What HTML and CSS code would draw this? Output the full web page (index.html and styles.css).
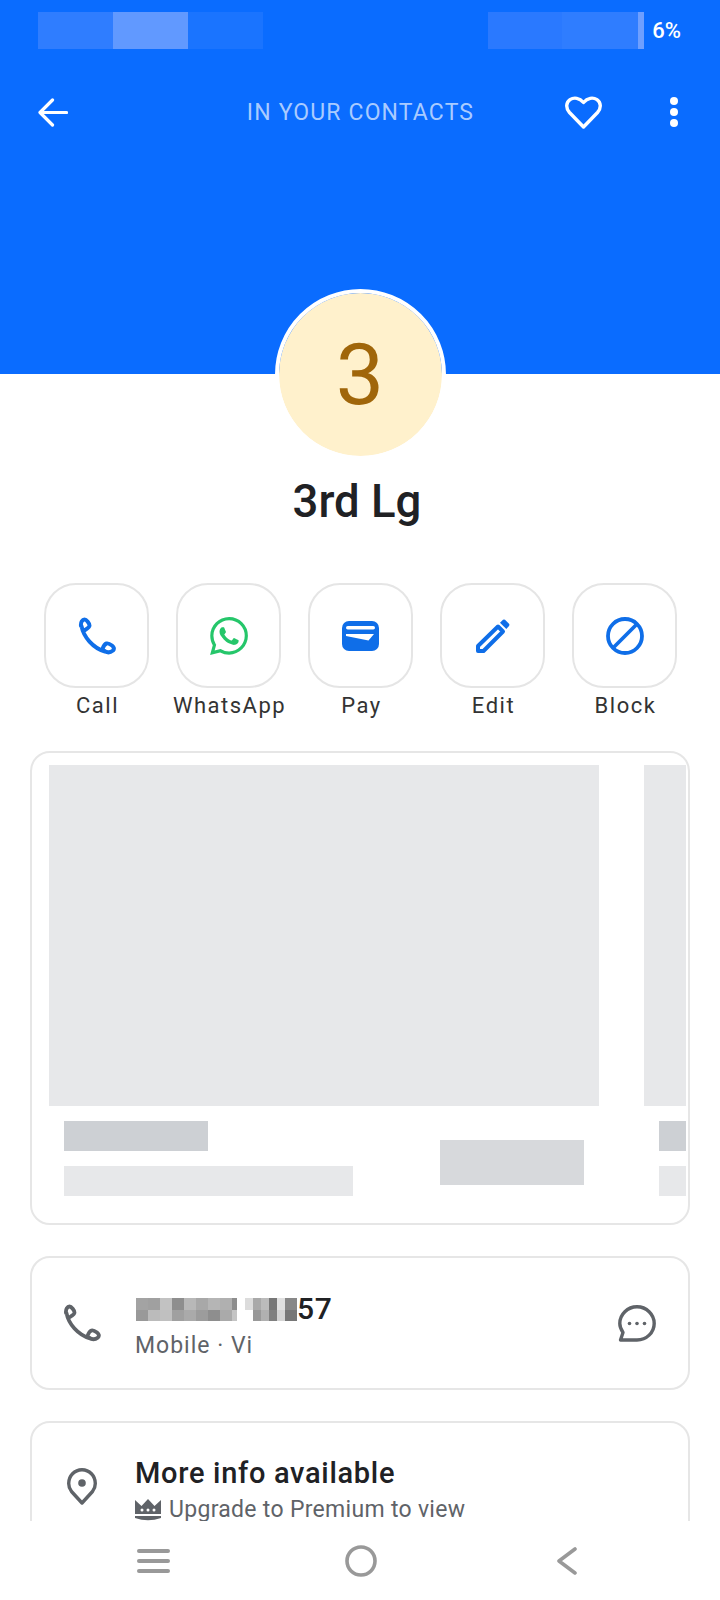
FILE: index.html
```html
<!DOCTYPE html>
<html lang="en">
<head>
    <meta charset="UTF-8">
    <meta name="viewport" content="width=device-width, initial-scale=1.0">
    <title>Contact</title>
    <link rel="stylesheet" href="styles.css">
</head>
<body>
    <main class="page">
        <header class="hero">
            <div class="status">
                <div class="status-group">
                    <span class="patch patch-a"></span>
                    <span class="patch patch-b"></span>
                    <span class="patch patch-c"></span>
                </div>
                <div class="status-group">
                    <span class="patch patch-d"></span>
                    <span class="patch patch-e"></span>
                    <span class="patch patch-f"></span>
                    <span class="battery">6%</span>
                </div>
            </div>
            <div class="toolbar">
                <svg class="back" viewBox="0 0 30 29" fill="none" stroke="#fff" stroke-width="3.2" stroke-linecap="round" stroke-linejoin="round"><path d="M14.5 2 2 14.5 14.5 27M2.5 14.5H28.5"/></svg>
                <div class="toolbar-title">IN YOUR CONTACTS</div>
                <div class="toolbar-actions">
                    <svg class="heart" viewBox="0 0 37 33" fill="none" stroke="#fff" stroke-width="3.4" stroke-linejoin="round"><path d="M18.5 31 4.500 16.500C.5 12 1 6.500 5 3.700 9 1 14.500 1.800 18.500 6.500 22.500 1.800 28 1 32 3.700 36 6.500 36.500 12 32.500 16.500Z"/></svg>
                    <div class="dots"><span></span><span></span><span></span></div>
                </div>
            </div>
        </header>

        <div class="avatar">3</div>
        <h1 class="name">3rd Lg</h1>

        <div class="actions">
            <div class="action">
                <div class="action-btn">
                    <svg class="ic" viewBox="0 0 38 38" fill="none" stroke="#0f6ee8" stroke-width="4" stroke-linecap="round" stroke-linejoin="round"><path d="M3 9C2.500 5 4.500 2.500 6.500 2.500 8.500 2.500 11.500 6.500 11.500 8.500 11.500 10.500 8.500 12 5.500 14M3.500 9C5.500 20 15 31 27 34.500M26 33.500C29 36 32.500 35.500 35 33.500 36.500 32 36 30 34 28.500 32 27 30 26 28.500 26.500 27 27 25.500 29 24.500 32"/></svg>
                </div>
                <span class="action-label">Call</span>
            </div>
            <div class="action">
                <div class="action-btn">
                    <svg class="ic" viewBox="0 0 24 24" fill="#25c66a"><path d="M17.472 14.382c-.297-.149-1.758-.867-2.03-.967-.273-.099-.471-.148-.67.15-.197.297-.767.966-.94 1.164-.173.199-.347.223-.644.075-.297-.15-1.255-.463-2.39-1.475-.883-.788-1.48-1.761-1.653-2.059-.173-.297-.018-.458.13-.606.134-.133.298-.347.446-.52.149-.174.198-.298.298-.497.099-.198.05-.371-.025-.52-.075-.149-.669-1.612-.916-2.207-.242-.579-.487-.5-.669-.51-.173-.008-.371-.01-.57-.01-.198 0-.52.074-.792.372-.272.297-1.04 1.016-1.04 2.479 0 1.462 1.065 2.875 1.213 3.074.149.198 2.096 3.2 5.077 4.487.709.306 1.262.489 1.694.625.712.227 1.36.195 1.871.118.571-.085 1.758-.719 2.006-1.413.248-.694.248-1.289.173-1.413-.074-.124-.272-.198-.57-.347m-5.421 7.403h-.004a9.87 9.87 0 01-5.031-1.378l-.361-.214-3.741.982.998-3.648-.235-.374a9.86 9.86 0 01-1.51-5.26c.001-5.45 4.436-9.884 9.888-9.884 2.64 0 5.122 1.03 6.988 2.898a9.825 9.825 0 012.893 6.994c-.003 5.45-4.437 9.884-9.885 9.884m8.413-18.297A11.815 11.815 0 0012.05 0C5.495 0 .16 5.335.157 11.892c0 2.096.547 4.142 1.588 5.945L.057 24l6.305-1.654a11.882 11.882 0 005.683 1.448h.005c6.554 0 11.89-5.335 11.893-11.893a11.821 11.821 0 00-3.48-8.413Z"/></svg>
                </div>
                <span class="action-label">WhatsApp</span>
            </div>
            <div class="action">
                <div class="action-btn">
                    <svg class="ic-pay" viewBox="0 0 37 30"><rect width="37" height="30" rx="7" fill="#0f6ee8"/><rect x="4" y="5" width="29" height="3.500" rx="1.750" fill="#fff"/><path d="M4 13H32L26.500 19.500 4 15Z" fill="#fff"/></svg>
                </div>
                <span class="action-label">Pay</span>
            </div>
            <div class="action">
                <div class="action-btn">
                    <svg class="ic-edit" viewBox="0 0 34 35" fill="none" stroke="#0f6ee8" stroke-width="4" stroke-linejoin="round"><path d="M2 28 22 8.500 27 13.500 7.500 33H2Z"/><path d="M24 4.800 27 1.800Q28 1 29 1.800L33 5.800Q33.800 6.800 33 8L30.300 11Z" fill="#0f6ee8" stroke="none"/></svg>
                </div>
                <span class="action-label">Edit</span>
            </div>
            <div class="action">
                <div class="action-btn">
                    <svg class="ic" viewBox="0 0 38 38" fill="none" stroke="#0f6ee8" stroke-width="3.800"><circle cx="19" cy="19" r="17"/><path d="M7 31 31 7"/></svg>
                </div>
                <span class="action-label">Block</span>
            </div>
        </div>

        <section class="card card-promo">
            <div class="carousel">
                <div class="slide">
                    <div class="slide-img"></div>
                    <div class="slide-foot">
                        <div class="slide-text">
                            <div class="bar bar-title"></div>
                            <div class="bar bar-sub"></div>
                        </div>
                        <div class="bar-btn"></div>
                    </div>
                </div>
                <div class="slide">
                    <div class="slide-img"></div>
                    <div class="slide-foot">
                        <div class="slide-text">
                            <div class="bar bar-title"></div>
                            <div class="bar bar-sub"></div>
                        </div>
                        <div class="bar-btn"></div>
                    </div>
                </div>
            </div>
        </section>

        <section class="card card-row card-phone">
            <svg class="row-icon" viewBox="0 0 38 38" fill="none" stroke="#5f6368" stroke-width="3.800" stroke-linecap="round" stroke-linejoin="round"><path d="M3 9C2.500 5 4.500 2.500 6.500 2.500 8.500 2.500 11.500 6.500 11.500 8.500 11.500 10.500 8.500 12 5.500 14M3.500 9C5.500 20 15 31 27 34.500M26 33.500C29 36 32.500 35.500 35 33.500 36.500 32 36 30 34 28.500 32 27 30 26 28.500 26.500 27 27 25.500 29 24.500 32"/></svg>
            <div class="row-body">
                <div class="number">
                    <svg class="pixels" viewBox="0 0 161 23">
                        <rect x="0" y="0" width="12" height="12" fill="#a3a3a3"/><rect x="12" y="0" width="12" height="12" fill="#a0a0a0"/><rect x="24" y="0" width="12" height="12" fill="#c2c2c2"/><rect x="36" y="0" width="12" height="12" fill="#8e8e8e"/><rect x="48" y="0" width="12" height="12" fill="#b8b8b8"/><rect x="60" y="0" width="12" height="12" fill="#a8a8a8"/><rect x="72" y="0" width="12" height="12" fill="#b5b5b5"/><rect x="84" y="0" width="12" height="12" fill="#b0b0b0"/><rect x="96" y="0" width="5" height="12" fill="#8d8d8d"/>
                        <rect x="109" y="0" width="8" height="12" fill="#dcdcdc"/><rect x="117" y="0" width="8" height="12" fill="#a9a9a9"/><rect x="125" y="0" width="8" height="12" fill="#bbbbbb"/><rect x="133" y="0" width="8" height="12" fill="#777777"/><rect x="141" y="0" width="8" height="12" fill="#e0e0e0"/><rect x="149" y="0" width="12" height="12" fill="#888888"/>
                        <rect x="0" y="12" width="12" height="11" fill="#999999"/><rect x="12" y="12" width="12" height="11" fill="#bbbbbb"/><rect x="24" y="12" width="12" height="11" fill="#c0c0c0"/><rect x="36" y="12" width="12" height="11" fill="#a0a0a0"/><rect x="48" y="12" width="12" height="11" fill="#aaaaaa"/><rect x="60" y="12" width="12" height="11" fill="#9c9c9c"/><rect x="72" y="12" width="12" height="11" fill="#8e8e8e"/><rect x="84" y="12" width="12" height="11" fill="#aaaaaa"/><rect x="96" y="12" width="5" height="11" fill="#c4c4c4"/>
                        <rect x="117" y="12" width="8" height="11" fill="#999999"/><rect x="125" y="12" width="8" height="11" fill="#b0b0b0"/><rect x="133" y="12" width="8" height="11" fill="#808080"/><rect x="141" y="12" width="8" height="11" fill="#d4d4d4"/><rect x="149" y="12" width="12" height="11" fill="#777777"/>
                    </svg>
                    <span class="row-title row-number">57</span>
                </div>
                <div class="row-sub">Mobile · Vi</div>
            </div>
            <svg class="chat-icon" viewBox="0 0 38 37" fill="none" stroke="#5f6368" stroke-width="3.400" stroke-linejoin="round"><path d="M2.500 35 5 27.500C3 24.500 1.800 21.800 1.800 18.500 1.800 9.500 9.500 1.800 19 1.800S36.200 9.500 36.200 18.500 28.500 35 19 35Z"/><circle cx="11.500" cy="18.500" r="1.800" fill="#5f6368" stroke="none"/><circle cx="19" cy="18.500" r="1.800" fill="#5f6368" stroke="none"/><circle cx="26.500" cy="18.500" r="1.800" fill="#5f6368" stroke="none"/></svg>
        </section>

        <section class="card card-row card-info">
            <svg class="pin-icon" viewBox="0 0 30 37" fill="none" stroke="#5f6368" stroke-width="3.400" stroke-linejoin="round"><path d="M15 35 4.500 23.500C2.500 21 1.700 18.500 1.700 15.500 1.700 8 7.500 1.700 15 1.700S28.300 8 28.300 15.500C28.300 18.500 27.500 21 25.500 23.500Z"/><circle cx="15" cy="15" r="3.800" fill="#5f6368" stroke="none"/></svg>
            <div class="row-body">
                <div class="row-title">More info available</div>
                <div class="row-sub upgrade">
                    <svg class="crown" viewBox="0 0 26 22"><path d="M0 1 6.500 7 13 0 19.500 7 26 1V15H0Z" fill="#5f6368"/><path d="M0 17H26V19Q13 23.500 0 19Z" fill="#5f6368"/><circle cx="7" cy="11" r="1.500" fill="#fff"/><circle cx="13" cy="11" r="1.500" fill="#fff"/><circle cx="19" cy="11" r="1.500" fill="#fff"/></svg>
                    <span>Upgrade to Premium to view</span>
                </div>
            </div>
        </section>

        <nav class="navbar">
            <svg class="nav-menu" viewBox="0 0 33 24" fill="#999"><rect width="33" height="4" rx="2"/><rect y="10" width="33" height="4" rx="2"/><rect y="20" width="33" height="4" rx="2"/></svg>
            <svg class="nav-home" viewBox="0 0 32 32" fill="none" stroke="#999" stroke-width="3.600"><circle cx="16" cy="16" r="14"/></svg>
            <svg class="nav-back" viewBox="0 0 20 28" fill="none" stroke="#999" stroke-width="3.600" stroke-linecap="round" stroke-linejoin="round"><path d="M18 2 2 14 18 26"/></svg>
        </nav>
    </main>
</body>
</html>
```

FILE: styles.css
```css
/* Page shell */
html, body {
    margin: 0;
    padding: 0;
}
body {
    font-family: Roboto, "Liberation Sans", sans-serif;
    background-color: #fff;
    color: #202124;
}
.page {
    position: relative;
    width: 720px;
    height: 1600px;
    overflow: hidden;
}

/* Blue header */
.hero {
    height: 374px;
    background-color: #0a6cff;
    box-sizing: border-box;
    padding-top: 12px;
}
.status {
    display: flex;
    justify-content: space-between;
    padding: 0 39px 0 38px;
    height: 37px;
}
.status-group {
    display: flex;
    align-items: stretch;
}
.patch { display: block; }
.patch-a { width: 75px; background-color: #2f7dff; }
.patch-b { width: 75px; background-color: #6199ff; }
.patch-c { width: 75px; background-color: #1a74ff; }
.patch-d { width: 74px; background-color: #2a79ff; }
.patch-e { width: 76px; background-color: #2f7dff; }
.patch-f { width: 6px; background-color: #6e9fff; }
.battery {
    margin-left: 8px;
    font-size: 22px;
    font-weight: 500;
    line-height: 38px;
    color: #fff;
}
.toolbar {
    display: grid;
    grid-template-columns: 1fr auto 1fr;
    align-items: center;
    height: 34px;
    margin-top: 46px;
    padding: 0 42px 0 38px;
}
.back {
    width: 30px;
    height: 29px;
}
.toolbar-title {
    padding: 2px 0 0 5px;
    font-size: 23px;
    line-height: 30px;
    letter-spacing: 1.15px;
    color: #a9cbff;
}
.toolbar-actions {
    display: flex;
    justify-content: flex-end;
    align-items: center;
    gap: 68px;
}
.heart {
    width: 37px;
    height: 33px;
}
.dots {
    display: flex;
    flex-direction: column;
    gap: 3.3px;
}
.dots span {
    width: 8px;
    height: 8px;
    border-radius: 50%;
    background-color: #fff;
}

/* Avatar and name */
.avatar {
    width: 163px;
    height: 163px;
    margin: -85px auto 0;
    border: 4px solid #fff;
    border-radius: 50%;
    background-color: #fff1cc;
    background-clip: padding-box;
    color: #a0660a;
    font-size: 86px;
    line-height: 163px;
    text-align: center;
}
.name {
    margin: 16px 0 0;
    padding-right: 6px;
    font-size: 45.5px;
    font-weight: 500;
    line-height: 52px;
    text-align: center;
}

/* Action buttons */
.actions {
    display: flex;
    gap: 27px;
    margin-top: 55px;
    padding-left: 44px;
}
.action {
    display: flex;
    flex-direction: column;
    align-items: center;
    width: 105px;
}
.action-btn {
    display: flex;
    align-items: center;
    justify-content: center;
    box-sizing: border-box;
    width: 105px;
    height: 105px;
    border: 2px solid #e5e5e5;
    border-radius: 32px;
}
.ic {
    width: 38px;
    height: 38px;
}
.ic-pay {
    width: 37px;
    height: 30px;
}
.ic-edit {
    width: 34px;
    height: 35px;
}
.action-label {
    margin-top: 4px;
    padding-left: 2px;
    font-size: 22px;
    line-height: 28px;
    letter-spacing: 1.5px;
    white-space: nowrap;
    color: #333;
}

/* Cards */
.card {
    box-sizing: border-box;
    width: 660px;
    margin-left: 30px;
    border: 2px solid #e6e6e6;
    border-radius: 20px;
    background-color: #fff;
}
.card-promo {
    height: 474px;
    margin-top: 31px;
    padding: 12px 2px 0 17px;
}
.carousel {
    display: flex;
    gap: 45px;
    overflow: hidden;
}
.slide {
    flex: 0 0 550px;
}
.slide-img {
    height: 341px;
    background-color: #e7e8ea;
}
.slide-foot {
    display: flex;
    justify-content: space-between;
    align-items: center;
    padding: 15px 15px 0;
}
.bar {
    height: 30px;
}
.bar-title {
    width: 144px;
    background-color: #cdd0d4;
}
.bar-sub {
    width: 289px;
    margin-top: 15px;
    background-color: #e7e8ea;
}
.bar-btn {
    width: 144px;
    height: 45px;
    margin-top: 8px;
    background-color: #d7d9dc;
}

/* Info rows */
.card-row {
    display: flex;
}
.card-phone {
    align-items: center;
    height: 134px;
    margin-top: 31px;
    padding: 0 32px 0 31px;
}
.row-icon {
    width: 38px;
    height: 38px;
}
.row-body {
    flex: 1;
    margin-left: 35px;
}
.card-phone .row-body {
    padding-top: 7px;
}
.number {
    display: flex;
    align-items: center;
}
.pixels {
    width: 161px;
    height: 23px;
}
.row-title {
    font-size: 29px;
    font-weight: 500;
    line-height: 34px;
    letter-spacing: 0.7px;
}
.row-number {
    font-size: 30px;
}
.row-sub {
    margin-top: 5px;
    font-size: 23px;
    line-height: 30px;
    letter-spacing: 1px;
    color: #5f6368;
}
.card-phone .row-sub {
    margin-left: -1px;
}
.chat-icon {
    width: 38px;
    height: 37px;
}
.card-info {
    height: 200px;
    margin-top: 31px;
    padding: 33px 0 0 35px;
}
.pin-icon {
    width: 30px;
    height: 37px;
    margin-top: 12px;
}
.card-info .row-body {
    margin-left: 38px;
}
.upgrade {
    display: flex;
    align-items: center;
    gap: 8px;
    margin-top: 5px;
    letter-spacing: 0.3px;
}
.crown {
    width: 26px;
    height: 22px;
}

/* Bottom navigation, sits over the scrolled content */
.navbar {
    position: absolute;
    left: 0;
    right: 0;
    bottom: 0;
    display: flex;
    align-items: center;
    height: 79px;
    background-color: #fff;
}
.nav-menu {
    width: 33px;
    height: 24px;
    margin: 0 0 0 137px;
}
.nav-home {
    width: 32px;
    height: 32px;
    margin-left: 175px;
}
.nav-back {
    width: 20px;
    height: 28px;
    margin-left: 180px;
}
```
